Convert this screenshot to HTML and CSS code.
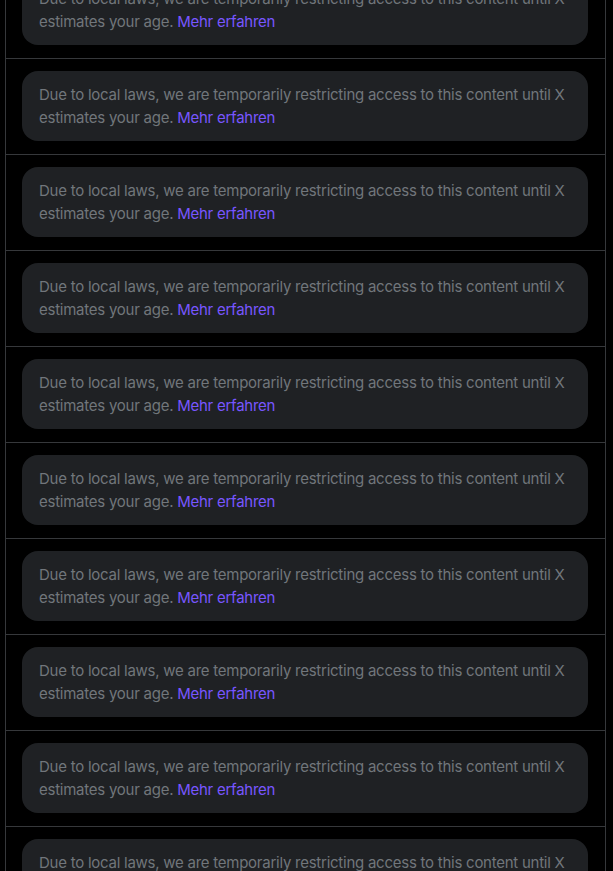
FILE: index.html
```html
<!DOCTYPE html>
<html>
<head>
<meta charset="utf-8">
<link rel="stylesheet" href="styles.css">
</head>
<body>
<main class="timeline">
  <article class="row"><div class="notice">Due to local laws, we are temporarily restricting access to this content until X estimates your age. <a class="more" href="#">Mehr erfahren</a></div></article>
  <article class="row"><div class="notice">Due to local laws, we are temporarily restricting access to this content until X estimates your age. <a class="more" href="#">Mehr erfahren</a></div></article>
  <article class="row"><div class="notice">Due to local laws, we are temporarily restricting access to this content until X estimates your age. <a class="more" href="#">Mehr erfahren</a></div></article>
  <article class="row"><div class="notice">Due to local laws, we are temporarily restricting access to this content until X estimates your age. <a class="more" href="#">Mehr erfahren</a></div></article>
  <article class="row"><div class="notice">Due to local laws, we are temporarily restricting access to this content until X estimates your age. <a class="more" href="#">Mehr erfahren</a></div></article>
  <article class="row"><div class="notice">Due to local laws, we are temporarily restricting access to this content until X estimates your age. <a class="more" href="#">Mehr erfahren</a></div></article>
  <article class="row"><div class="notice">Due to local laws, we are temporarily restricting access to this content until X estimates your age. <a class="more" href="#">Mehr erfahren</a></div></article>
  <article class="row"><div class="notice">Due to local laws, we are temporarily restricting access to this content until X estimates your age. <a class="more" href="#">Mehr erfahren</a></div></article>
  <article class="row"><div class="notice">Due to local laws, we are temporarily restricting access to this content until X estimates your age. <a class="more" href="#">Mehr erfahren</a></div></article>
  <article class="row"><div class="notice">Due to local laws, we are temporarily restricting access to this content until X estimates your age. <a class="more" href="#">Mehr erfahren</a></div></article>
</main>
</body>
</html>
```
FILE: styles.css
```css
html, body {
  margin: 0;
  padding: 0;
  background: #000;
  height: 100%;
  overflow: hidden;
}
.timeline {
  margin: -37px 0 0 5px;
  width: 599px;
  min-height: 1000px;
  border-left: 1px solid #36383b;
  border-right: 1px solid #36383b;
}
.row {
  padding: 12px 17px 13px 16px;
  border-bottom: 1px solid #36383b;
}
.notice {
  background: #1f2124;
  border-radius: 16px;
  padding: 12px 16px 12px 17px;
  font-family: Inter, "Noto Sans", sans-serif;
  font-size: 15px;
  letter-spacing: -0.25px;
  line-height: 23px;
  color: #71767b;
}
.more {
  color: #7856ff;
  text-decoration: none;
}
```
